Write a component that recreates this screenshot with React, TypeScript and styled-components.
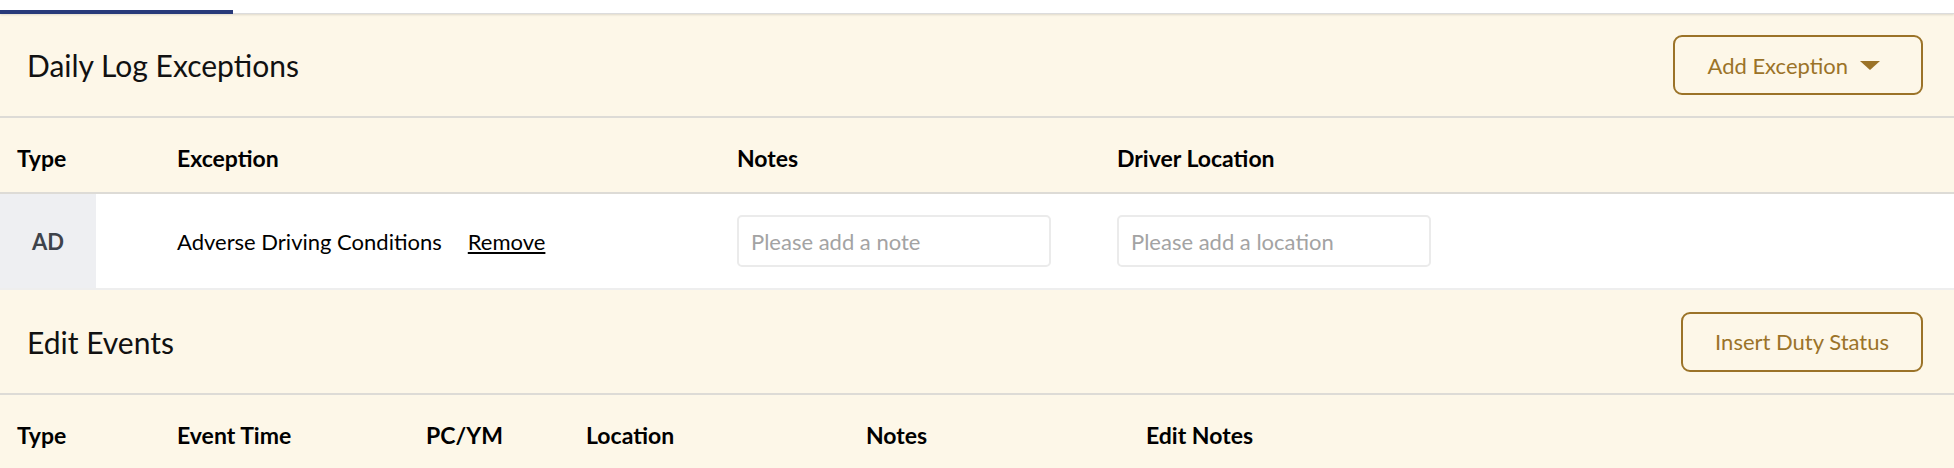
import React from 'react';
import styled, { createGlobalStyle } from 'styled-components';

const GlobalStyle = createGlobalStyle`
  body {
    margin: 0;
    background: #ffffff;
    font-family: Lato, "Liberation Sans", sans-serif;
    color: #111111;
  }
`;

const beige = '#fdf7e8';
const gold = '#9b7328';

const Page = styled.div`
  width: 1954px;
  overflow: hidden;
`;

const TabStrip = styled.div`
  height: 14px;
  box-sizing: border-box;
  padding-top: 10px;
  border-bottom: 1px solid #dcdcdc;
  box-shadow: 0 1px 2px rgba(0, 0, 0, 0.12);
  position: relative;
  z-index: 1;
`;

const ActiveTab = styled.div`
  width: 233px;
  height: 4px;
  background: #283a7a;
`;

const SectionHeader = styled.div<{ $height: number }>`
  height: ${({ $height }) => $height}px;
  background: ${beige};
  display: flex;
  align-items: center;
  justify-content: space-between;
  padding: 0 31px 0 27px;
  border-bottom: 2px solid #dddbd6;
`;

const Title = styled.h2`
  margin: 0;
  font-size: 30px;
  font-weight: 400;
  color: #111111;
`;

const OutlineButton = styled.button`
  height: 60px;
  box-sizing: border-box;
  display: flex;
  align-items: center;
  padding: 0 32px;
  border: 2px solid ${gold};
  border-radius: 9px;
  background: transparent;
  color: ${gold};
  font-family: inherit;
  font-size: 22px;
  cursor: pointer;
`;

const Caret = styled.span`
  width: 0;
  height: 0;
  margin: 0 9px 0 12px;
  border-left: 10px solid transparent;
  border-right: 10px solid transparent;
  border-top: 9px solid ${gold};
`;

const HeaderRow = styled.div<{ $cols: string }>`
  display: grid;
  grid-template-columns: ${({ $cols }) => $cols};
  height: 74px;
  align-items: center;
  background: ${beige};
  border-bottom: 2px solid #dddbd6;
`;

const HeadCell = styled.div`
  padding: 6px 0 0 17px;
  font-size: 23px;
  font-weight: 700;
  color: #000000;
`;

const DataRow = styled.div<{ $cols: string }>`
  display: grid;
  grid-template-columns: ${({ $cols }) => $cols};
  height: 94px;
  align-items: center;
  background: #ffffff;
  border-bottom: 2px solid #eeeeee;
`;

const TypeCell = styled.div`
  align-self: stretch;
  display: flex;
`;

const TypeBadge = styled.div`
  width: 96px;
  background: #eeeff2;
  display: flex;
  align-items: center;
  justify-content: center;
  font-size: 22px;
  font-weight: 700;
  color: #3e434b;
`;

const Cell = styled.div`
  padding-left: 17px;
  display: flex;
  align-items: center;
  gap: 26px;
  font-size: 22px;
  color: #000000;
`;

const RemoveLink = styled.a`
  color: #000000;
  text-decoration: underline;
  cursor: pointer;
`;

const TextInput = styled.input`
  width: 314px;
  height: 52px;
  box-sizing: border-box;
  padding: 0 12px;
  border: 2px solid #ebebeb;
  border-radius: 5px;
  font-family: inherit;
  font-size: 22px;
  color: #222222;
  outline: none;

  &::placeholder {
    color: #a3a3a3;
  }
`;

const exceptionCols = '160px 560px 380px 1fr';
const eventCols = '160px 249px 160px 280px 280px 1fr';

export default function App() {
  return (
    <Page>
      <GlobalStyle />
      <TabStrip>
        <ActiveTab />
      </TabStrip>

      <SectionHeader $height={102}>
        <Title>Daily Log Exceptions</Title>
        <OutlineButton>
          Add Exception
          <Caret />
        </OutlineButton>
      </SectionHeader>
      <HeaderRow $cols={exceptionCols}>
        <HeadCell>Type</HeadCell>
        <HeadCell>Exception</HeadCell>
        <HeadCell>Notes</HeadCell>
        <HeadCell>Driver Location</HeadCell>
      </HeaderRow>
      <DataRow $cols={exceptionCols}>
        <TypeCell>
          <TypeBadge>AD</TypeBadge>
        </TypeCell>
        <Cell>
          <span>Adverse Driving Conditions</span>
          <RemoveLink>Remove</RemoveLink>
        </Cell>
        <Cell>
          <TextInput placeholder="Please add a note" />
        </Cell>
        <Cell>
          <TextInput placeholder="Please add a location" />
        </Cell>
      </DataRow>

      <SectionHeader $height={103}>
        <Title>Edit Events</Title>
        <OutlineButton>Insert Duty Status</OutlineButton>
      </SectionHeader>
      <HeaderRow $cols={eventCols}>
        <HeadCell>Type</HeadCell>
        <HeadCell>Event Time</HeadCell>
        <HeadCell>PC/YM</HeadCell>
        <HeadCell>Location</HeadCell>
        <HeadCell>Notes</HeadCell>
        <HeadCell>Edit Notes</HeadCell>
      </HeaderRow>
    </Page>
  );
}
